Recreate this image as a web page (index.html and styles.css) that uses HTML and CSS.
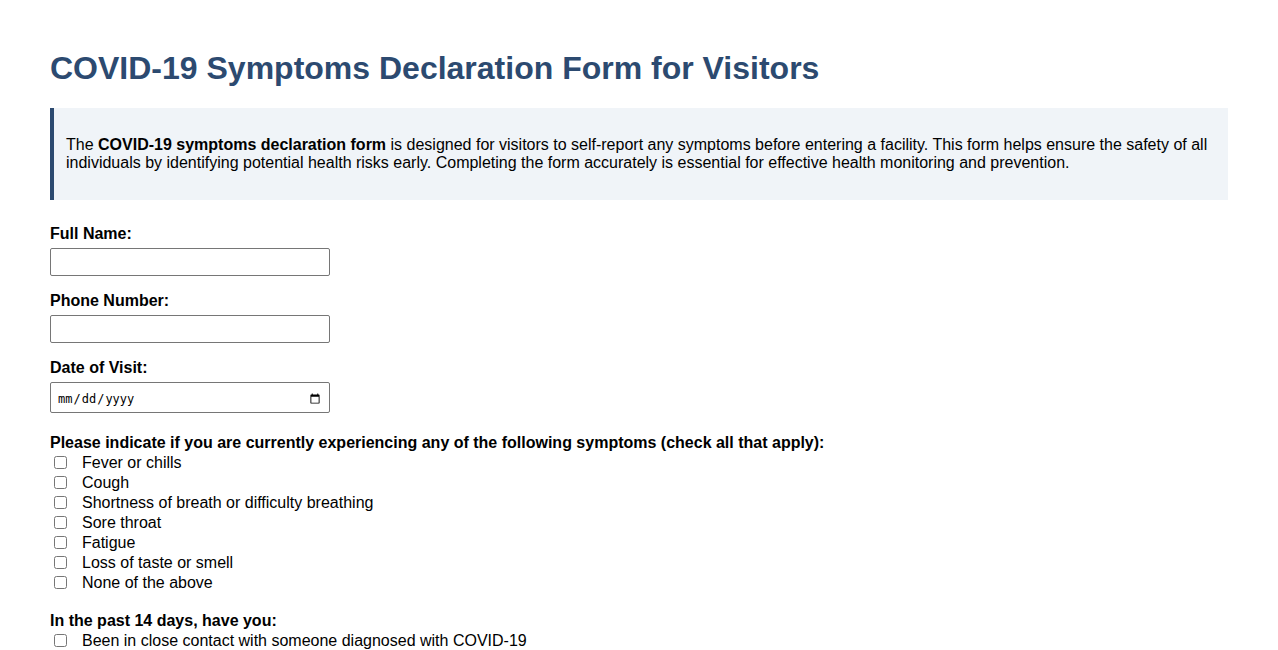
FILE: index.html
```html
<!DOCTYPE html>
<html lang="en">
<head>
<meta charset="utf-8">
<title>COVID-19 Symptoms Declaration Form for Visitors</title>
<link rel="stylesheet" href="styles.css">
</head>
<body>
<main class="page">
  <h1 class="title">COVID-19 Symptoms Declaration Form for Visitors</h1>
  <div class="intro">
    <p>The <strong>COVID-19 symptoms declaration form</strong> is designed for visitors to self-report any symptoms before entering a facility. This form helps ensure the safety of all individuals by identifying potential health risks early. Completing the form accurately is essential for effective health monitoring and prevention.</p>
  </div>
  <form class="form">
    <div class="field">
      <label class="field-label" for="name">Full Name:</label>
      <input class="text-input" id="name" type="text">
    </div>
    <div class="field">
      <label class="field-label" for="phone">Phone Number:</label>
      <input class="text-input" id="phone" type="tel">
    </div>
    <div class="field">
      <label class="field-label" for="date">Date of Visit:</label>
      <input class="date-input" id="date" type="date">
    </div>
    <div class="group">
      <div class="group-label">Please indicate if you are currently experiencing any of the following symptoms (check all that apply):</div>
      <label class="check"><input type="checkbox" class="box"><span class="check-text">Fever or chills</span></label>
      <label class="check"><input type="checkbox" class="box"><span class="check-text">Cough</span></label>
      <label class="check"><input type="checkbox" class="box"><span class="check-text">Shortness of breath or difficulty breathing</span></label>
      <label class="check"><input type="checkbox" class="box"><span class="check-text">Sore throat</span></label>
      <label class="check"><input type="checkbox" class="box"><span class="check-text">Fatigue</span></label>
      <label class="check"><input type="checkbox" class="box"><span class="check-text">Loss of taste or smell</span></label>
      <label class="check"><input type="checkbox" class="box"><span class="check-text">None of the above</span></label>
    </div>
    <div class="group">
      <div class="group-label">In the past 14 days, have you:</div>
      <label class="check"><input type="checkbox" class="box"><span class="check-text">Been in close contact with someone diagnosed with COVID-19</span></label>
    </div>
  </form>
</main>
</body>
</html>
```

FILE: styles.css
```css
html, body {
  margin: 0;
  padding: 0;
  background: #ffffff;
}
body {
  font-family: "Liberation Sans", Arial, sans-serif;
  font-size: 16px;
  color: #000000;
}
.page {
  padding: 0 50px;
}
.title {
  margin: 50px 0 21px;
  font-size: 32px;
  line-height: 37px;
  font-weight: bold;
  color: #2c4a70;
}
.intro {
  background: #f0f4f8;
  border-left: 4px solid #2c4a70;
  padding: 12px 12px;
}
.intro p {
  margin: 16px 0;
  line-height: 18px;
}
.form {
  margin-top: 24px;
}
.field {
  margin-bottom: 15px;
}
.field-label {
  display: block;
  font-weight: bold;
  line-height: 18px;
  padding-top: 1px;
  margin-bottom: 5px;
}
.text-input,
.date-input {
  display: block;
  box-sizing: border-box;
  width: 280px;
  margin: 0;
  border: 1px solid #767676;
  border-radius: 2px;
  background: #fff;
}
.text-input {
  height: 28px;
}
.date-input {
  height: 31px;
  padding: 2px 6px 0;
  font-family: "DejaVu Sans Mono", monospace;
  font-size: 12px;
}
.group {
  margin-top: 21px;
  margin-bottom: 0;
}
.group + .group {
  margin-top: 20px;
}
.group-label {
  font-weight: bold;
  line-height: 18px;
}
.check {
  display: flex;
  align-items: center;
  height: 20px;
  line-height: 18px;
}
.check-text {
  padding-top: 2px;
}
.box {
  width: 13px;
  height: 13px;
  margin: 0 15px 0 4px;
  flex: none;
}
```
